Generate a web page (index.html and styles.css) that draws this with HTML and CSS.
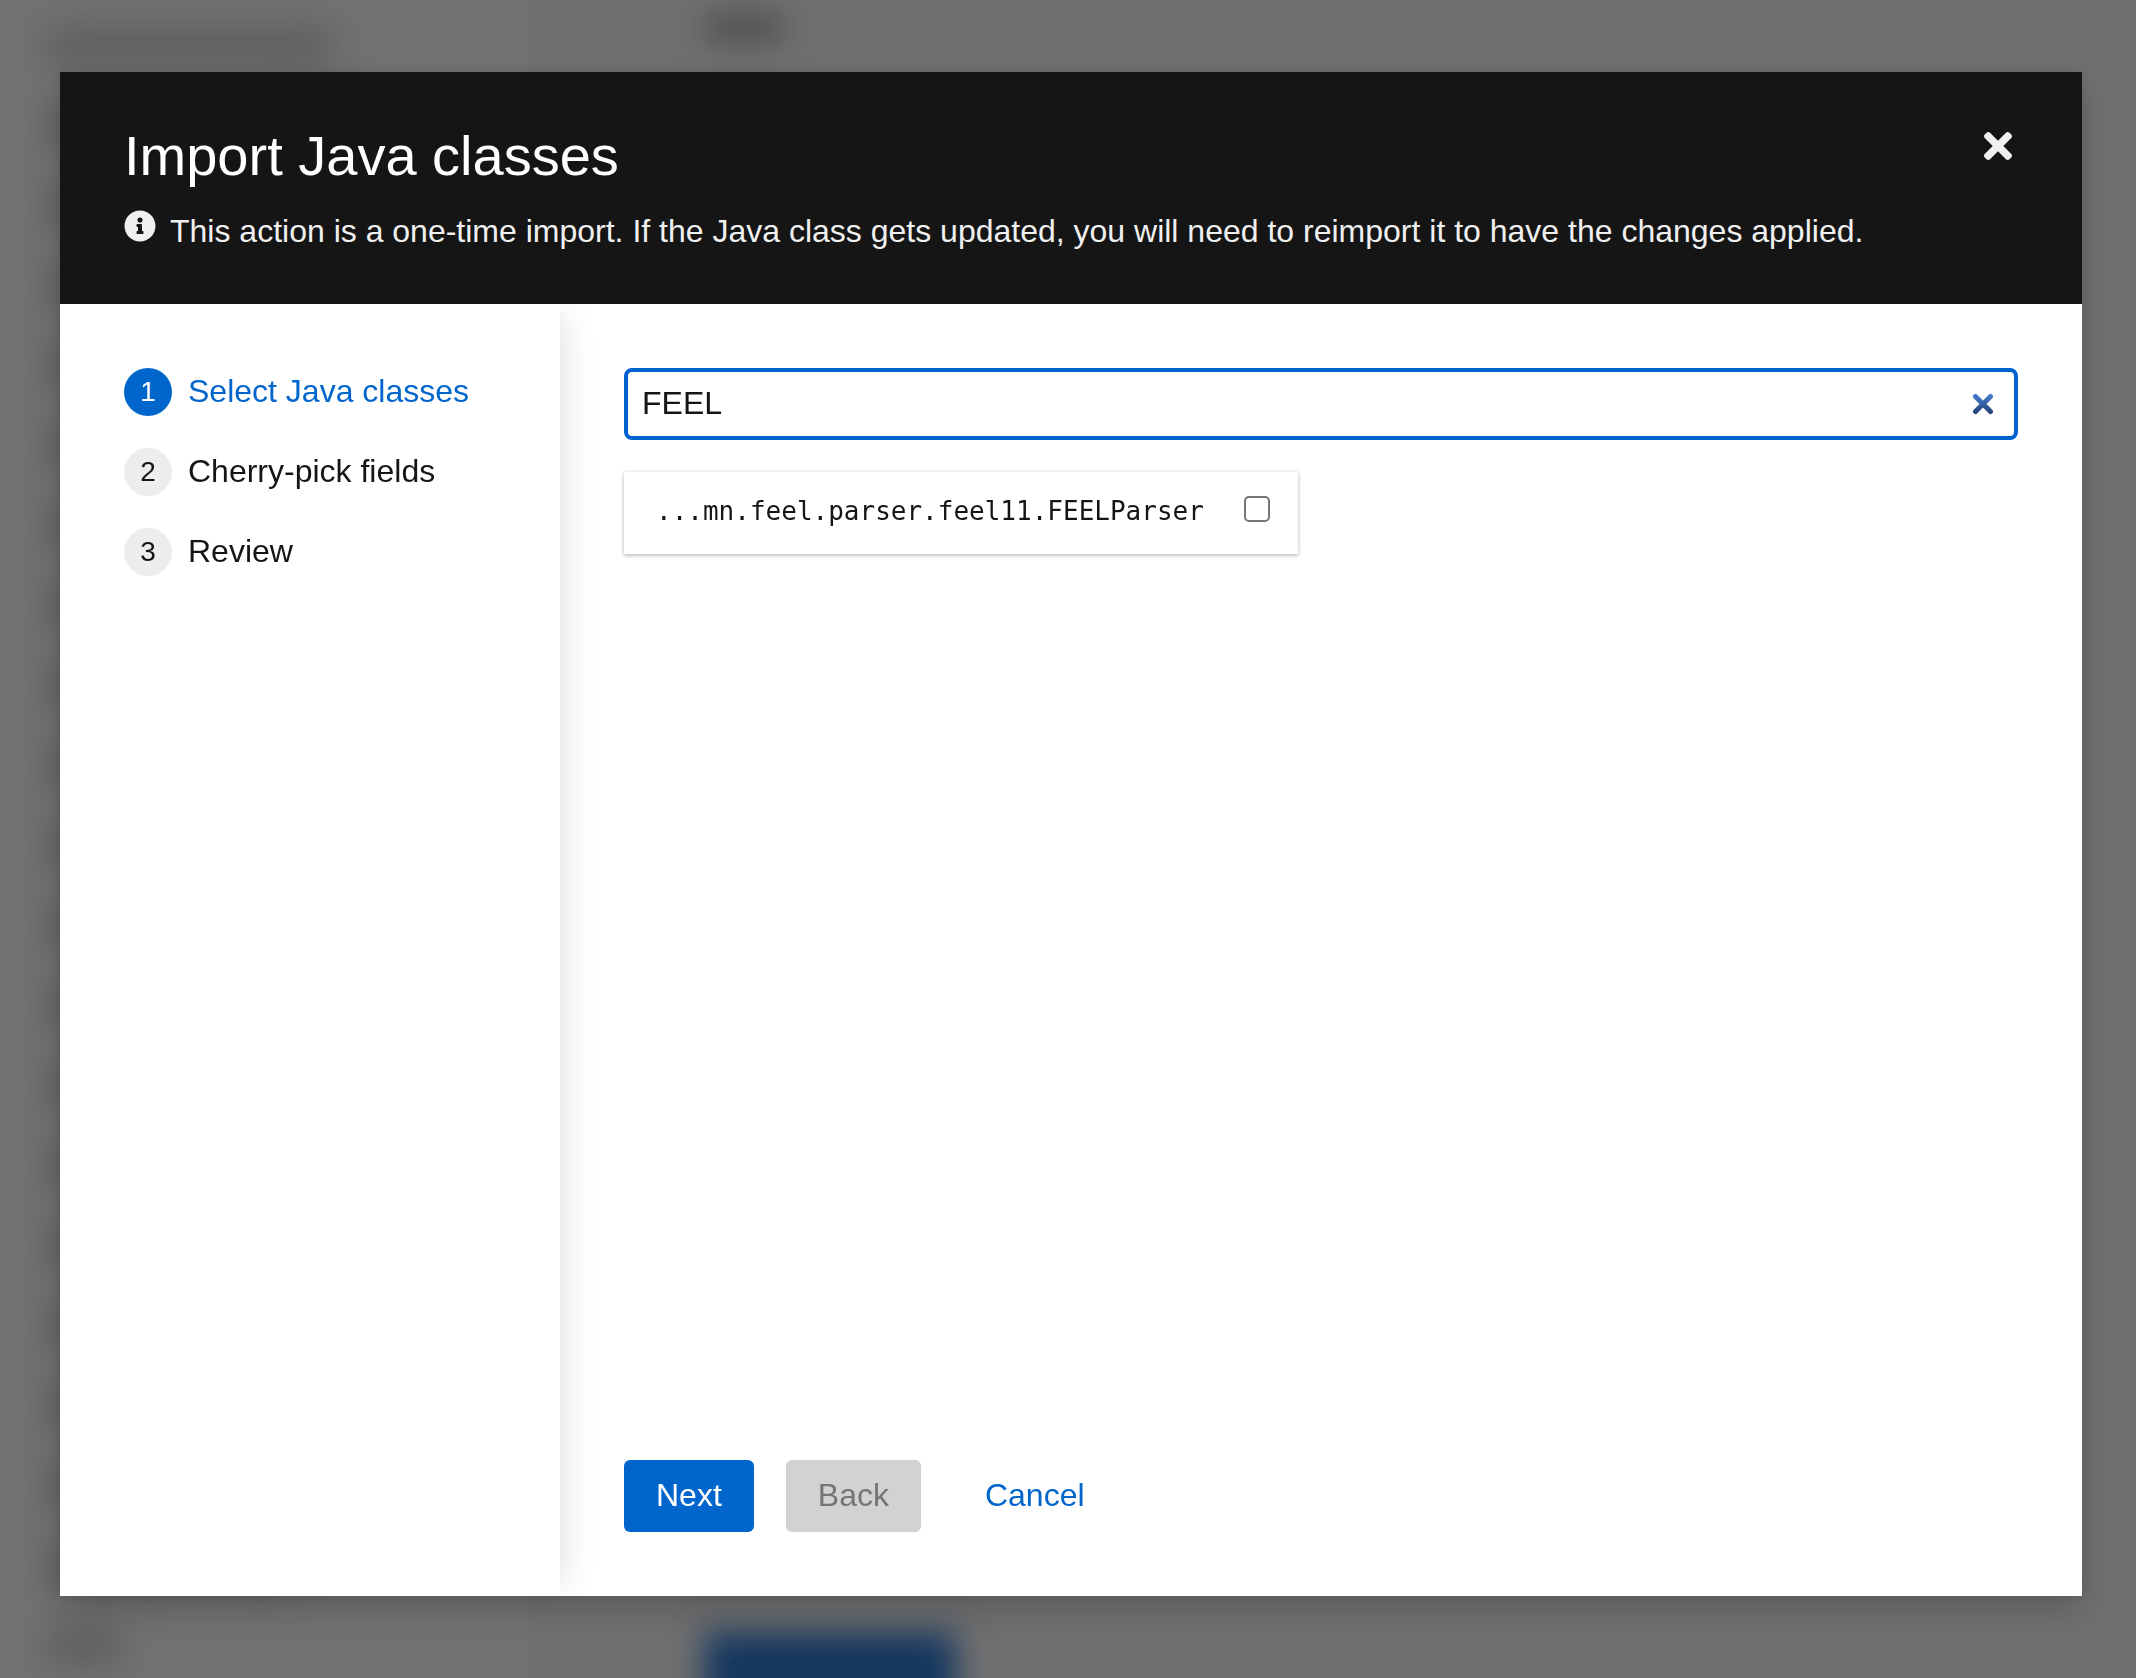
FILE: index.html
```html
<!DOCTYPE html>
<html lang="en">
<head>
<meta charset="utf-8">
<meta name="viewport" content="width=device-width, initial-scale=1">
<title>Import Java classes</title>
<link rel="stylesheet" href="styles.css">
</head>
<body>
<div class="backdrop" aria-hidden="true">
  <div class="backdrop-nav">
    <span class="backdrop-title"></span>
    <span class="backdrop-item"></span><span class="backdrop-item"></span><span class="backdrop-item"></span>
    <span class="backdrop-item"></span><span class="backdrop-item"></span><span class="backdrop-item"></span>
    <span class="backdrop-item"></span><span class="backdrop-item"></span><span class="backdrop-item"></span>
    <span class="backdrop-item"></span><span class="backdrop-item"></span><span class="backdrop-item"></span>
    <span class="backdrop-item"></span><span class="backdrop-item"></span><span class="backdrop-item"></span>
    <span class="backdrop-item"></span><span class="backdrop-item"></span><span class="backdrop-item"></span>
    <span class="backdrop-item"></span><span class="backdrop-item backdrop-item-short"></span>
  </div>
  <div class="backdrop-content">
    <span class="backdrop-label"></span>
    <span class="backdrop-button"></span>
  </div>
</div>
<div class="stage">
  <section class="wizard" role="dialog" aria-modal="true" aria-labelledby="wizard-title">
    <header class="wizard-header">
      <div class="wizard-heading">
        <h1 class="wizard-title" id="wizard-title">Import Java classes</h1>
        <p class="wizard-description">
          <svg class="info-icon" viewBox="0 0 512 512" aria-hidden="true"><path fill="currentColor" d="M256 8C119 8 8 119 8 256s111 248 248 248 248-111 248-248S393 8 256 8zm0 110c23.200 0 42 18.800 42 42s-18.800 42-42 42-42-18.800-42-42 18.800-42 42-42zm56 254c0 6.600-5.400 12-12 12h-88c-6.600 0-12-5.400-12-12v-24c0-6.600 5.400-12 12-12h12v-64h-12c-6.600 0-12-5.400-12-12v-24c0-6.600 5.400-12 12-12h64c6.600 0 12 5.400 12 12v100h12c6.600 0 12 5.400 12 12v24z"/></svg>
          <span>This action is a one-time import. If the Java class gets updated, you will need to reimport it to have the changes applied.</span>
        </p>
      </div>
      <button class="close-button" type="button" aria-label="Close">
        <svg class="close-icon" viewBox="0 80 352 352" aria-hidden="true"><path fill="currentColor" d="M242.720 256l100.070-100.070c12.280-12.280 12.280-32.190 0-44.480l-22.240-22.240c-12.280-12.280-32.190-12.280-44.480 0L176 189.280 75.930 89.210c-12.280-12.280-32.190-12.280-44.480 0L9.210 111.450c-12.280 12.280-12.280 32.190 0 44.480L109.280 256 9.210 356.070c-12.280 12.280-12.280 32.190 0 44.480l22.240 22.240c12.280 12.280 32.200 12.280 44.480 0L176 322.720l100.070 100.070c12.280 12.280 32.200 12.280 44.480 0l22.240-22.240c12.280-12.280 12.280-32.190 0-44.480L242.720 256z"/></svg>
      </button>
    </header>
    <div class="wizard-body">
      <nav class="wizard-nav" aria-label="Steps">
        <ol class="steps">
          <li><button class="step step-current" type="button" aria-current="step"><span class="step-number">1</span>Select Java classes</button></li>
          <li><button class="step" type="button"><span class="step-number">2</span>Cherry-pick fields</button></li>
          <li><button class="step" type="button"><span class="step-number">3</span>Review</button></li>
        </ol>
      </nav>
      <div class="wizard-main">
        <div class="wizard-content">
          <div class="search">
            <input class="search-input" type="text" value="FEEL" aria-label="Search Java classes">
            <button class="clear-button" type="button" aria-label="Clear search">
              <svg class="clear-icon" viewBox="0 0 22 22" aria-hidden="true">
                <defs><linearGradient id="clear-fill" gradientUnits="userSpaceOnUse" x1="0" y1="0" x2="0" y2="22"><stop offset="0" stop-color="#4a82d2"/><stop offset="0.500" stop-color="#355fa5"/><stop offset="1" stop-color="#203c6e"/></linearGradient></defs>
                <path d="M3.500 3.500L18.500 18.500M18.500 3.500L3.500 18.500" fill="none" stroke="url(#clear-fill)" stroke-width="5" stroke-linecap="round"/>
              </svg>
            </button>
          </div>
          <div class="results">
            <label class="result">
              <span class="result-name">...mn.feel.parser.feel11.FEELParser</span>
              <input class="result-check" type="checkbox">
            </label>
          </div>
        </div>
        <footer class="wizard-footer">
          <button class="button button-primary" type="button">Next</button>
          <button class="button button-disabled" type="button" disabled>Back</button>
          <button class="button button-link" type="button">Cancel</button>
        </footer>
      </div>
    </div>
  </section>
</div>
</body>
</html>
```
FILE: styles.css
```css
*,
*::before,
*::after {
  box-sizing: border-box;
}

body {
  margin: 0;
  background: #727272;
  color: #151515;
  font-family: "Liberation Sans", Arial, Helvetica, sans-serif;
  font-size: 32px;
  line-height: 46px;
}

button,
input {
  font: inherit;
  color: inherit;
}

button {
  border: 0;
  padding: 0;
  background: none;
  cursor: pointer;
}

/* Dimmed, out-of-focus page behind the dialog */
.backdrop {
  position: fixed;
  inset: 0;
  display: flex;
  overflow: hidden;
}

.backdrop-nav {
  display: flex;
  flex-direction: column;
  gap: 48px;
  width: 530px;
  padding: 30px 48px;
  filter: blur(18px);
}

.backdrop-nav span {
  flex: none;
  height: 32px;
  background: #5a5a5a;
}

.backdrop-title {
  width: 284px;
}

.backdrop-item {
  width: 240px;
}

.backdrop-nav .backdrop-item-short {
  width: 72px;
}

.backdrop-content {
  flex: 1;
  display: flex;
  flex-direction: column;
  justify-content: space-between;
  padding-left: 174px;
  background: #707070;
}

.backdrop-label {
  width: 80px;
  height: 28px;
  margin-top: 14px;
  background: #4e4e4e;
  filter: blur(16px);
}

.backdrop-button {
  width: 252px;
  height: 80px;
  margin-bottom: -34px;
  background: #14375f;
  filter: blur(16px);
}

.stage {
  position: relative;
  display: flex;
  min-height: 100vh;
  padding: 72px 54px 82px 60px;
}

.wizard {
  flex: 1;
  display: flex;
  flex-direction: column;
  min-width: 0;
  background: #fff;
  box-shadow: 0 16px 32px rgba(3, 3, 3, 0.16), 0 0 12px rgba(3, 3, 3, 0.1);
}

.wizard-header {
  position: relative;
  z-index: 2;
  display: flex;
  justify-content: space-between;
  align-items: flex-start;
  padding: 48px 64px 50px;
  background: #151515;
  color: #f0f0f0;
}

.wizard-title {
  margin: 0 0 16px;
  color: #fff;
  font-size: 56px;
  font-weight: 400;
  line-height: 72px;
}

.wizard-description {
  display: flex;
  gap: 14px;
  margin: 0;
}

.info-icon {
  flex: none;
  width: 32px;
  height: 32px;
  margin-top: 2px;
}

.close-button {
  display: flex;
  padding: 12px 6px;
}

.close-icon {
  width: 28px;
  height: 28px;
}

.wizard-body {
  flex: 1;
  display: flex;
}

.wizard-nav {
  position: relative;
  z-index: 1;
  flex: none;
  width: 500px;
  padding: 64px;
  background: #fff;
  box-shadow: 16px 0 32px -12px rgba(3, 3, 3, 0.12);
}

.steps {
  display: flex;
  flex-direction: column;
  gap: 32px;
  margin: 0;
  padding: 0;
  list-style: none;
}

.step {
  display: flex;
  gap: 16px;
}

.step-current {
  color: #06c;
}

.step-number {
  width: 48px;
  height: 48px;
  border-radius: 50%;
  background: #ededed;
  font-size: 28px;
  line-height: 48px;
  text-align: center;
}

.step-current .step-number {
  background: #06c;
  color: #fff;
}

.wizard-main {
  flex: 1;
  display: flex;
  flex-direction: column;
  justify-content: space-between;
  min-width: 0;
  padding: 64px;
}

.wizard-content {
  display: flex;
  flex-direction: column;
  gap: 32px;
}

.search {
  display: flex;
  align-items: center;
  height: 72px;
  padding: 0 20px 0 14px;
  border: 4px solid #0061d0;
  border-radius: 8px;
}

.search-input {
  flex: 1;
  min-width: 0;
  padding: 0 0 2px;
  border: 0;
  outline: 0;
  background: none;
}

.clear-button,
.clear-icon {
  display: block;
  width: 22px;
  height: 22px;
}

.results {
  display: grid;
  grid-template-columns: 1fr 1fr;
  gap: 46px;
}

.result {
  display: flex;
  justify-content: space-between;
  align-items: flex-start;
  padding: 16px 28px 20px 32px;
  box-shadow: 0 2px 4px rgba(3, 3, 3, 0.2), 0 0 4px rgba(3, 3, 3, 0.12);
}

.result-name {
  font-family: "DejaVu Sans Mono", "Liberation Mono", monospace;
  font-size: 26px;
}

.result-check {
  appearance: none;
  width: 26px;
  height: 26px;
  margin: 8px 0 0;
  border: 2px solid #767676;
  border-radius: 5px;
  background: #fff;
}

.wizard-footer {
  display: flex;
  gap: 32px;
}

.button {
  height: 72px;
  padding: 0 32px 2px;
  border-radius: 6px;
}

.button-primary {
  background: #06c;
  color: #fff;
}

.button-disabled {
  background: #d2d2d2;
  color: #737679;
  cursor: default;
}

.button-link {
  color: #06c;
}
```
